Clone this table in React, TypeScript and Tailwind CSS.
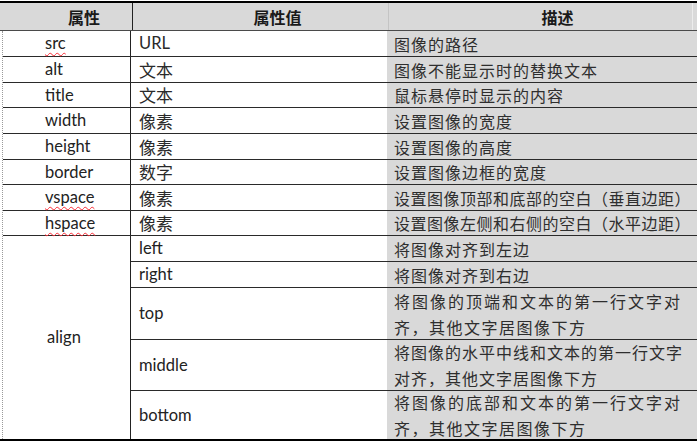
import React from "react";

const en = { fontFamily: "Lato, 'Open Sans', 'Noto Sans CJK SC', sans-serif" };
const cjk = { fontFamily: "'Noto Sans CJK SC', 'Noto Sans', sans-serif" };

type Row = { name: string; wavy?: boolean; value: string; desc: string; h: number; tight?: boolean };

const rows: Row[] = [
  { name: "src", wavy: true, value: "URL", desc: "图像的路径", h: 26 },
  { name: "alt", value: "文本", desc: "图像不能显示时的替换文本", h: 26 },
  { name: "title", value: "文本", desc: "鼠标悬停时显示的内容", h: 25 },
  { name: "width", value: "像素", desc: "设置图像的宽度", h: 26 },
  { name: "height", value: "像素", desc: "设置图像的高度", h: 26 },
  { name: "border", value: "数字", desc: "设置图像边框的宽度", h: 25 },
  { name: "vspace", wavy: true, value: "像素", desc: "设置图像顶部和底部的空白（垂直边距）", h: 26, tight: true },
  { name: "hspace", wavy: true, value: "像素", desc: "设置图像左侧和右侧的空白（水平边距）", h: 25, tight: true },
];

type Sub = { value: string; lines: { t: string; track: string }[]; h: number };
const subs: Sub[] = [
  { value: "left", lines: [{ t: "将图像对齐到左边", track: "tracking-[1px]" }], h: 26 },
  { value: "right", lines: [{ t: "将图像对齐到右边", track: "tracking-[1px]" }], h: 26 },
  {
    value: "top",
    lines: [
      { t: "将图像的顶端和文本的第一行文字对", track: "tracking-[2px]" },
      { t: "齐，其他文字居图像下方", track: "tracking-[1.5px]" },
    ],
    h: 52,
  },
  {
    value: "middle",
    lines: [
      { t: "将图像的水平中线和文本的第一行文字", track: "tracking-[1px]" },
      { t: "对齐，其他文字居图像下方", track: "tracking-[1px]" },
    ],
    h: 51,
  },
  {
    value: "bottom",
    lines: [
      { t: "将图像的底部和文本的第一行文字对", track: "tracking-[2px]" },
      { t: "齐，其他文字居图像下方", track: "tracking-[1.5px]" },
    ],
    h: 49,
  },
];

export default function App() {
  return (
    <div className="w-[697px] h-[442px] bg-white overflow-hidden pt-[1px]">
      <div className="border-t-2 border-b-2 border-black">
        {/* header */}
        <div className="flex h-[28px] bg-[#d9d9d9] border-b border-[#4a4a4a] text-[16px] font-bold text-[#1a1a1a]" style={cjk}>
          <div className="w-[131px] ml-[2px] border-r border-[#222] flex items-center justify-center pl-[34px]">属性</div>
          <div className="w-[256px] border-r border-[#c4c4c4] flex items-center justify-center pl-[34px]">属性值</div>
          <div className="flex-1 flex items-center justify-center pl-[34px] border-r border-[#ececec] mr-[4px]">描述</div>
        </div>
        <div className="ml-[2px] border-l border-dotted border-[#9a9a9a]">
          {rows.map((r) => (
            <div
              key={r.name}
              className="flex border-b border-[#2a2a2a]"
              style={{ height: r.h }}
            >
              <div className="w-[128px] border-r border-[#222] flex items-center pl-[42px] text-[16.5px] text-[#222]" style={en}>
                <span className={r.wavy ? "underline decoration-wavy decoration-red-500 decoration-1 underline-offset-[3px]" : ""}>
                  {r.name}
                </span>
              </div>
              <div
                className={`w-[256px] flex items-center pl-[8px] text-[#2a2a2a] ${r.value === "URL" ? "text-[16.5px]" : "text-[17px]"}`}
                style={r.value === "URL" ? en : cjk}
              >
                {r.value}
              </div>
              <div
                className={`flex-1 bg-[#d9d9d9] flex items-center pl-[7px] text-[16px] text-[#2e2e2e] whitespace-nowrap ${r.tight ? "tracking-[0.5px]" : "tracking-[1px]"}`}
                style={cjk}
              >
                {r.desc}
              </div>
            </div>
          ))}
          {/* align group */}
          <div className="flex">
            <div className="w-[128px] border-r border-[#222] flex items-center pl-[44px] text-[16.5px] text-[#222]" style={en}>
              align
            </div>
            <div className="flex-1 flex flex-col">
              {subs.map((s, i) => (
                <div
                  key={s.value}
                  className={`flex ${i < subs.length - 1 ? "border-b border-[#2a2a2a]" : ""}`}
                  style={{ height: i < subs.length - 1 ? s.h : s.h - 1 }}
                >
                  <div className="w-[256px] flex items-center pl-[8px] text-[16.5px] text-[#222]" style={en}>
                    {s.value}
                  </div>
                  <div className="flex-1 bg-[#d9d9d9] flex flex-col justify-center pl-[7px] text-[16px] text-[#2e2e2e] leading-[26px] whitespace-nowrap" style={cjk}>
                    {s.lines.map((l) => (
                      <span key={l.t} className={l.track}>{l.t}</span>
                    ))}
                  </div>
                </div>
              ))}
            </div>
          </div>
        </div>
      </div>
    </div>
  );
}
